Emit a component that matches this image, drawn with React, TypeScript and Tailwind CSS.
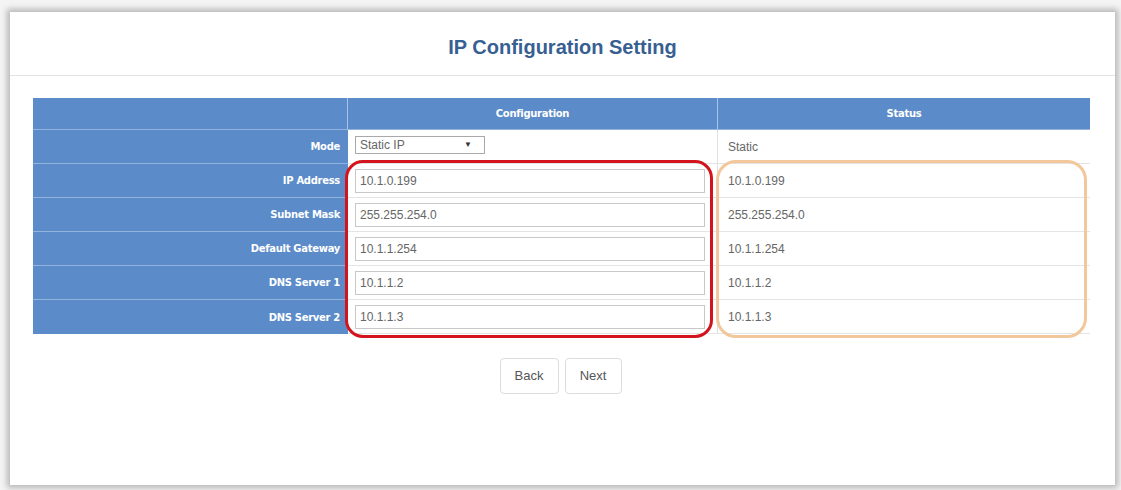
import React from 'react'

type Row = { label: string; value: string; status: string }

const rows: Row[] = [
  { label: 'IP Address', value: '10.1.0.199', status: '10.1.0.199' },
  { label: 'Subnet Mask', value: '255.255.254.0', status: '255.255.254.0' },
  { label: 'Default Gateway', value: '10.1.1.254', status: '10.1.1.254' },
  { label: 'DNS Server 1', value: '10.1.1.2', status: '10.1.1.2' },
  { label: 'DNS Server 2', value: '10.1.1.3', status: '10.1.1.3' },
]

const labelCell =
  "flex items-center justify-end pr-[8px] bg-[#5b8bc8] border-b border-[#93b3de] text-white font-bold text-[10px] font-['DejaVu_Sans',sans-serif] tracking-[-0.3px]"

export default function App() {
  return (
    <div className="w-[1121px] h-[490px] bg-[#f4f4f4] pt-[12px] pl-[10px] pr-[6px] font-['Liberation_Sans',Arial,sans-serif]">
      <div className="relative h-[473px] bg-white shadow-[0_0_6px_3px_rgba(0,0,0,0.25)]">
        {/* Title */}
        <div className="h-[64px] border-b border-[#e3e3e3] flex items-center justify-center pt-[6px]">
          <h1 className="text-[20px] font-bold text-[#375f92]">IP Configuration Setting</h1>
        </div>

        {/* Settings table */}
        <div className="mt-[22px] ml-[23px] w-[1057px] grid grid-cols-[315px_370px_372px] text-[12px] text-[#666]">
          <div className="h-[32px] bg-[#5b8bc8] border-b border-[#93b3de] border-r border-r-[#a9c3e6]" />
          <div className="h-[32px] bg-[#5b8bc8] border-b border-[#93b3de] border-r border-r-[#a9c3e6] flex items-center justify-center text-white font-bold text-[10px] font-['DejaVu_Sans',sans-serif] tracking-[-0.3px]">
            Configuration
          </div>
          <div className="h-[32px] bg-[#5b8bc8] border-b border-[#93b3de] flex items-center justify-center text-white font-bold text-[10px] font-['DejaVu_Sans',sans-serif] tracking-[-0.3px]">
            Status
          </div>

          {/* Mode row */}
          <div className={`h-[34px] ${labelCell}`}>Mode</div>
          <div className="h-[34px] flex items-center pl-[7px] pb-[3px] border-b border-[#e4e4e4] border-r border-r-[#e0e0e0]">
            <div className="w-[130px] h-[18px] border border-[#a9a9a9] bg-white flex items-center justify-between px-[4px]">
              <span className="text-[12px] text-[#666]">Static IP</span>
              <span className="text-[8px] text-[#333] pr-[8px]">▼</span>
            </div>
          </div>
          <div className="h-[34px] flex items-center pl-[10px] border-b border-[#e4e4e4]">Static</div>

          {rows.map((r, i) => (
            <React.Fragment key={r.label}>
              <div className={`h-[34px] ${labelCell} ${i === rows.length - 1 ? 'border-b-0' : ''}`}>{r.label}</div>
              <div className="h-[34px] flex items-center pl-[7px] border-b border-[#e4e4e4] border-r border-r-[#e0e0e0]">
                <div className="w-[350px] h-[24px] border border-[#c8c8c8] flex items-center px-[4px] bg-white">
                  {r.value}
                </div>
              </div>
              <div className="h-[34px] flex items-center pl-[10px] border-b border-[#e4e4e4]">{r.status}</div>
            </React.Fragment>
          ))}
        </div>

        {/* Navigation */}
        <div className="mt-[24px] flex justify-center gap-[6px] pr-[4px]">
          <button className="w-[59px] h-[36px] border border-[#dcdcdc] rounded-[4px] bg-white text-[13px] text-[#555]">
            Back
          </button>
          <button className="w-[57px] h-[36px] border border-[#dcdcdc] rounded-[4px] bg-white text-[13px] text-[#555]">
            Next
          </button>
        </div>

        {/* Highlight outlines */}
        <div className="absolute left-[335px] top-[148px] w-[368px] h-[178px] border-[3px] border-[#d3141c] rounded-[18px] pointer-events-none" />
        <div className="absolute left-[706px] top-[148px] w-[371px] h-[178px] border-[3px] border-[#f2c79c] rounded-[20px] pointer-events-none" />
      </div>
    </div>
  )
}
